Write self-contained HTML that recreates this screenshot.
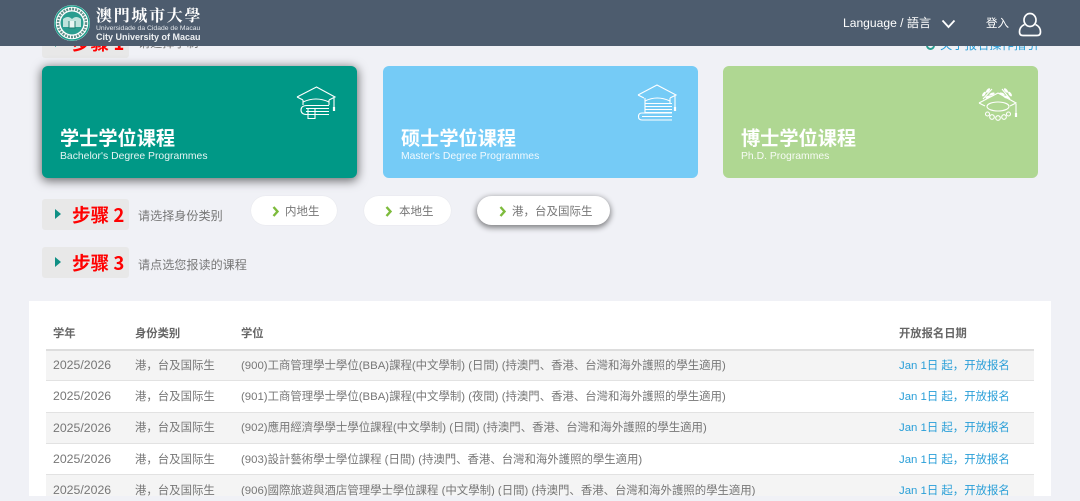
<!DOCTYPE html>
<html><head><meta charset="utf-8">
<style>
*{box-sizing:border-box;margin:0;padding:0}
html,body{width:1080px;height:501px;overflow:hidden;background:#f0f1f6;font-family:"Liberation Sans","Noto Sans CJK SC",sans-serif}
.abs{position:absolute;white-space:nowrap}
#hdr{position:absolute;left:0;top:0;width:1080px;height:46px;background:#4d5c6e;z-index:5;color:#fff}
.chip{position:absolute;left:42px;width:87px;height:31px;background:#e8e8e8;border-radius:3px}
.chip i{position:absolute;left:13px;top:10px;border-left:6px solid #0f8f84;border-top:5px solid transparent;border-bottom:5px solid transparent}
.chip b{position:absolute;left:30px;top:3px;font-size:18.600px;line-height:25px;color:#f00;white-space:nowrap;font-family:"Noto Sans CJK SC",sans-serif;font-weight:700}
.steptxt{position:absolute;left:138px;font-size:12.100px;line-height:16px;color:#777;white-space:nowrap;font-family:"Noto Sans CJK SC",sans-serif}
.card{position:absolute;top:66px;height:112px;border-radius:6px;color:#fff}
.card h3{position:absolute;left:18px;top:58px;font-size:19.200px;line-height:26px;font-weight:700;font-family:"Noto Sans CJK SC",sans-serif;white-space:nowrap}
.card p{position:absolute;left:18px;top:84px;font-size:10.400px;line-height:13px;white-space:nowrap;opacity:.9}
.card svg{position:absolute;fill:none;stroke:#fff;stroke-width:1.100}
.pill{position:absolute;top:195.500px;height:29.500px;background:#fff;border-radius:15px;font-size:11.500px;line-height:30px;color:#777;font-family:"Noto Sans CJK SC",sans-serif;white-space:nowrap;box-shadow:0 0 1px #d8d9de}
.pill svg{position:absolute;top:10px;fill:none;stroke:#7dbb3c;stroke-width:2.400}
.pill span{position:absolute;top:0}
#panel{position:absolute;left:29px;top:301px;width:1022px;height:195px;background:#fff;overflow:hidden}
.th{position:absolute;top:24px;font-size:11.300px;line-height:16px;font-weight:700;color:#666;white-space:nowrap;font-family:"Noto Sans CJK SC",sans-serif}
.row{position:absolute;left:17px;width:988px;border-top:1px solid #e2e2e2;font-size:11.400px;color:#777;font-family:"Liberation Sans","Noto Sans CJK SC",sans-serif}
.row.g{background:#f4f4f4}
.row span{position:absolute;top:0;white-space:nowrap;line-height:30px}
.row.a span{top:1px}
.y{left:7px;font-size:12.300px}.s{left:89px}.c{left:195px}.d{left:853px;color:#2a9fd8}
.row span.u{top:-1px}
.row span.z{top:0}
</style></head><body>

<div id="hdr">
  <svg class="abs" style="left:53px;top:4px" width="38" height="38" viewBox="0 0 38 38">
    <circle cx="19" cy="19" r="18" fill="#fff"/>
    <circle cx="19" cy="19" r="17" fill="none" stroke="#1e9d8c" stroke-width="1.500"/>
    <circle cx="19" cy="19" r="11.500" fill="#2a9d8f"/>
    <circle cx="19" cy="19" r="14" fill="none" stroke="#5f8f89" stroke-width="2.500" stroke-dasharray="2 1"/>
    <path d="M10 15q5-4 9 0q4-4 9 0v8h-18z" fill="#bfe3dc"/>
    <path d="M16 17v7h6v-7" fill="#e8f5f2" stroke="#1e7d70" stroke-width="1"/>
  </svg>
  <div class="abs" style="left:96px;top:5px;font-size:16px;line-height:20px;letter-spacing:1.700px;font-weight:700;font-family:'Noto Serif CJK SC',serif">澳門城市大學</div>
  <div class="abs" style="left:96px;top:25px;font-size:6.800px;line-height:8px;color:#e4e8ec">Universidade da Cidade de Macau</div>
  <div class="abs" style="left:96px;top:31.500px;font-size:9px;line-height:11px;font-weight:700;color:#eef1f3">City University of Macau</div>
  <div class="abs" style="left:843px;top:15px;font-size:12.100px;line-height:17px;font-family:'Liberation Sans','Noto Sans CJK TC',sans-serif">Language / 語言</div>
  <svg class="abs" style="left:941px;top:19px" width="15" height="10" viewBox="0 0 15 10"><path d="M1.500 1.500L7.500 8l6-6.500" fill="none" stroke="#fff" stroke-width="1.800"/></svg>
  <div class="abs" style="left:986px;top:15px;font-size:11.500px;line-height:17px;font-family:'Noto Sans CJK SC',sans-serif">登入</div>
  <svg class="abs" style="left:1018px;top:12px" width="24" height="25" viewBox="0 0 24 25" fill="none" stroke="#fff" stroke-width="1.700"><ellipse cx="12" cy="8" rx="6" ry="6.500"/><path d="M6.500 12.500C3 14 1.500 17 1.500 20q0 3.500 3.500 3.500h14q3.500 0 3.500-3.500c0-3-1.500-6-5-7.500"/></svg>
</div>

<div class="chip" style="top:27px"><i></i><b>步骤 1</b></div>
<div class="steptxt" style="top:35px">请选择学制</div>
<div class="abs" style="left:926px;top:41px;width:9px;height:9px;border-radius:50%;border:2px solid #2a9d8f;background:#f0f1f6"></div>
<div class="abs" style="left:940px;top:36px;font-size:12.300px;line-height:17px;color:#2a9fd8;font-family:'Noto Sans CJK SC',sans-serif">关于报名操作指引</div>

<div class="card" style="left:42px;width:315px;background:#009886;box-shadow:0 2px 10px 1px rgba(0,0,0,.55)">
  <h3>学士学位课程</h3><p>Bachelor's Degree Programmes</p>
  <svg style="left:254px;top:20px" width="42" height="34" viewBox="0 0 42 34">
    <path d="M1 11L20.500 1 39 11l-6 3M7 14l-6-3M7 14v5M33 14v5M7 16q13-6 26 0"/>
    <path d="M38 12v9"/><path d="M38 21v4" stroke-width="2.200"/>
    <path d="M33 19.500H11Q5 19.500 5 24T11 28.500H33M10 22.500H33M10 25.500H33M12 22v10.500h7V22"/>
  </svg>
</div>
<div class="card" style="left:383px;width:315px;background:#75cbf6">
  <h3>硕士学位课程</h3><p>Master's Degree Programmes</p>
  <svg style="left:254px;top:18px" width="42" height="38" viewBox="0 0 42 38">
    <path d="M1 11L20 1l19 10-6 3M7 14l-6-3M8 14v5M33 14v5M8 17q12-6 25 0"/>
    <path d="M38 12v11"/><path d="M38 23v4" stroke-width="2.200"/>
    <path d="M35 19.500H8v9h27M8 22.500h27M8 25.500h27M35 29H5Q1.500 29 1.500 32.500T5 36H35M5 32.500H35"/>
  </svg>
</div>
<div class="card" style="left:723px;width:315px;background:#afd792">
  <h3>博士学位课程</h3><p>Ph.D. Programmes</p>
  <svg style="left:255px;top:20px" width="42" height="36" viewBox="0 0 42 36">
    <path d="M1 17L20 7l18 10-6 3M7 20l-6-3"/>
    <path d="M38 18v9"/><path d="M38 27v4" stroke-width="2.200"/>
    <ellipse cx="20" cy="20.500" rx="11" ry="4.500"/>
    <path d="M5 13L14 3M32 13L24 3"/>
    <g fill="#fff" stroke="none">
      <ellipse cx="6" cy="8" rx="1.300" ry="2.800" transform="rotate(35 6 8)"/>
      <ellipse cx="10" cy="4.500" rx="1.300" ry="2.800" transform="rotate(40 10 4.500)"/>
      <ellipse cx="14" cy="8" rx="1.300" ry="2.800" transform="rotate(70 14 8)"/>
      <ellipse cx="10" cy="11" rx="1.300" ry="2.800" transform="rotate(70 10 11)"/>
      <ellipse cx="32" cy="8" rx="1.300" ry="2.800" transform="rotate(-35 32 8)"/>
      <ellipse cx="28" cy="4.500" rx="1.300" ry="2.800" transform="rotate(-40 28 4.500)"/>
      <ellipse cx="24" cy="8" rx="1.300" ry="2.800" transform="rotate(-70 24 8)"/>
      <ellipse cx="28" cy="11" rx="1.300" ry="2.800" transform="rotate(-70 28 11)"/>
    </g>
    <circle cx="9.500" cy="28" r="2"/><circle cx="14" cy="31" r="2.300"/><circle cx="20" cy="32" r="2.300"/><circle cx="26" cy="31" r="2.300"/><circle cx="30.500" cy="28" r="2"/>
  </svg>
</div>

<div class="chip" style="top:199px"><i></i><b>步骤 2</b></div>
<div class="steptxt" style="top:208px">请选择身份类别</div>
<div class="chip" style="top:247px"><i></i><b>步骤 3</b></div>
<div class="steptxt" style="top:256.500px">请点选您报读的课程</div>

<div class="pill" style="left:251px;width:86px"><svg style="left:21px" width="8" height="11" viewBox="0 0 8 11"><path d="M1.500 1l4 4.500-4 4.500"/></svg><span style="left:34px">内地生</span></div>
<div class="pill" style="left:364px;width:87px"><svg style="left:21px" width="8" height="11" viewBox="0 0 8 11"><path d="M1.500 1l4 4.500-4 4.500"/></svg><span style="left:35px">本地生</span></div>
<div class="pill" style="left:477px;width:133px;box-shadow:0 2px 6px 1px rgba(0,0,0,.45)"><svg style="left:22px" width="8" height="11" viewBox="0 0 8 11"><path d="M1.500 1l4 4.500-4 4.500"/></svg><span style="left:35px">港，台及国际生</span></div>

<div id="panel">
  <div class="th" style="left:24px">学年</div>
  <div class="th" style="left:106px">身份类别</div>
  <div class="th" style="left:212px">学位</div>
  <div class="th" style="left:870px">开放报名日期</div>
  <div class="row g" style="top:48px;height:31px;border-top:2px solid #ddd"><span class="y u">2025/2026</span><span class="s">港，台及国际生</span><span class="c">(900)工商管理學士學位(BBA)課程(中文學制) (日間) (持澳門、香港、台灣和海外護照的學生適用)</span><span class="d">Jan 1日 起，开放报名</span></div>
  <div class="row" style="top:79px;height:32px"><span class="y">2025/2026</span><span class="s" style="top:1px">港，台及国际生</span><span class="c" style="top:1px">(901)工商管理學士學位(BBA)課程(中文學制) (夜間) (持澳門、香港、台灣和海外護照的學生適用)</span><span class="d" style="top:1px">Jan 1日 起，开放报名</span></div>
  <div class="row g" style="top:111px;height:31px"><span class="y">2025/2026</span><span class="s">港，台及国际生</span><span class="c">(902)應用經濟學學士學位課程(中文學制) (日間) (持澳門、香港、台灣和海外護照的學生適用)</span><span class="d">Jan 1日 起，开放报名</span></div>
  <div class="row a" style="top:142px;height:31px"><span class="y z">2025/2026</span><span class="s">港，台及国际生</span><span class="c">(903)設計藝術學士學位課程 (日間) (持澳門、香港、台灣和海外護照的學生適用)</span><span class="d">Jan 1日 起，开放报名</span></div>
  <div class="row g a" style="top:173px;height:31px"><span class="y z">2025/2026</span><span class="s">港，台及国际生</span><span class="c">(906)國際旅遊與酒店管理學士學位課程 (中文學制) (日間) (持澳門、香港、台灣和海外護照的學生適用)</span><span class="d">Jan 1日 起，开放报名</span></div>
</div>
</body></html>
